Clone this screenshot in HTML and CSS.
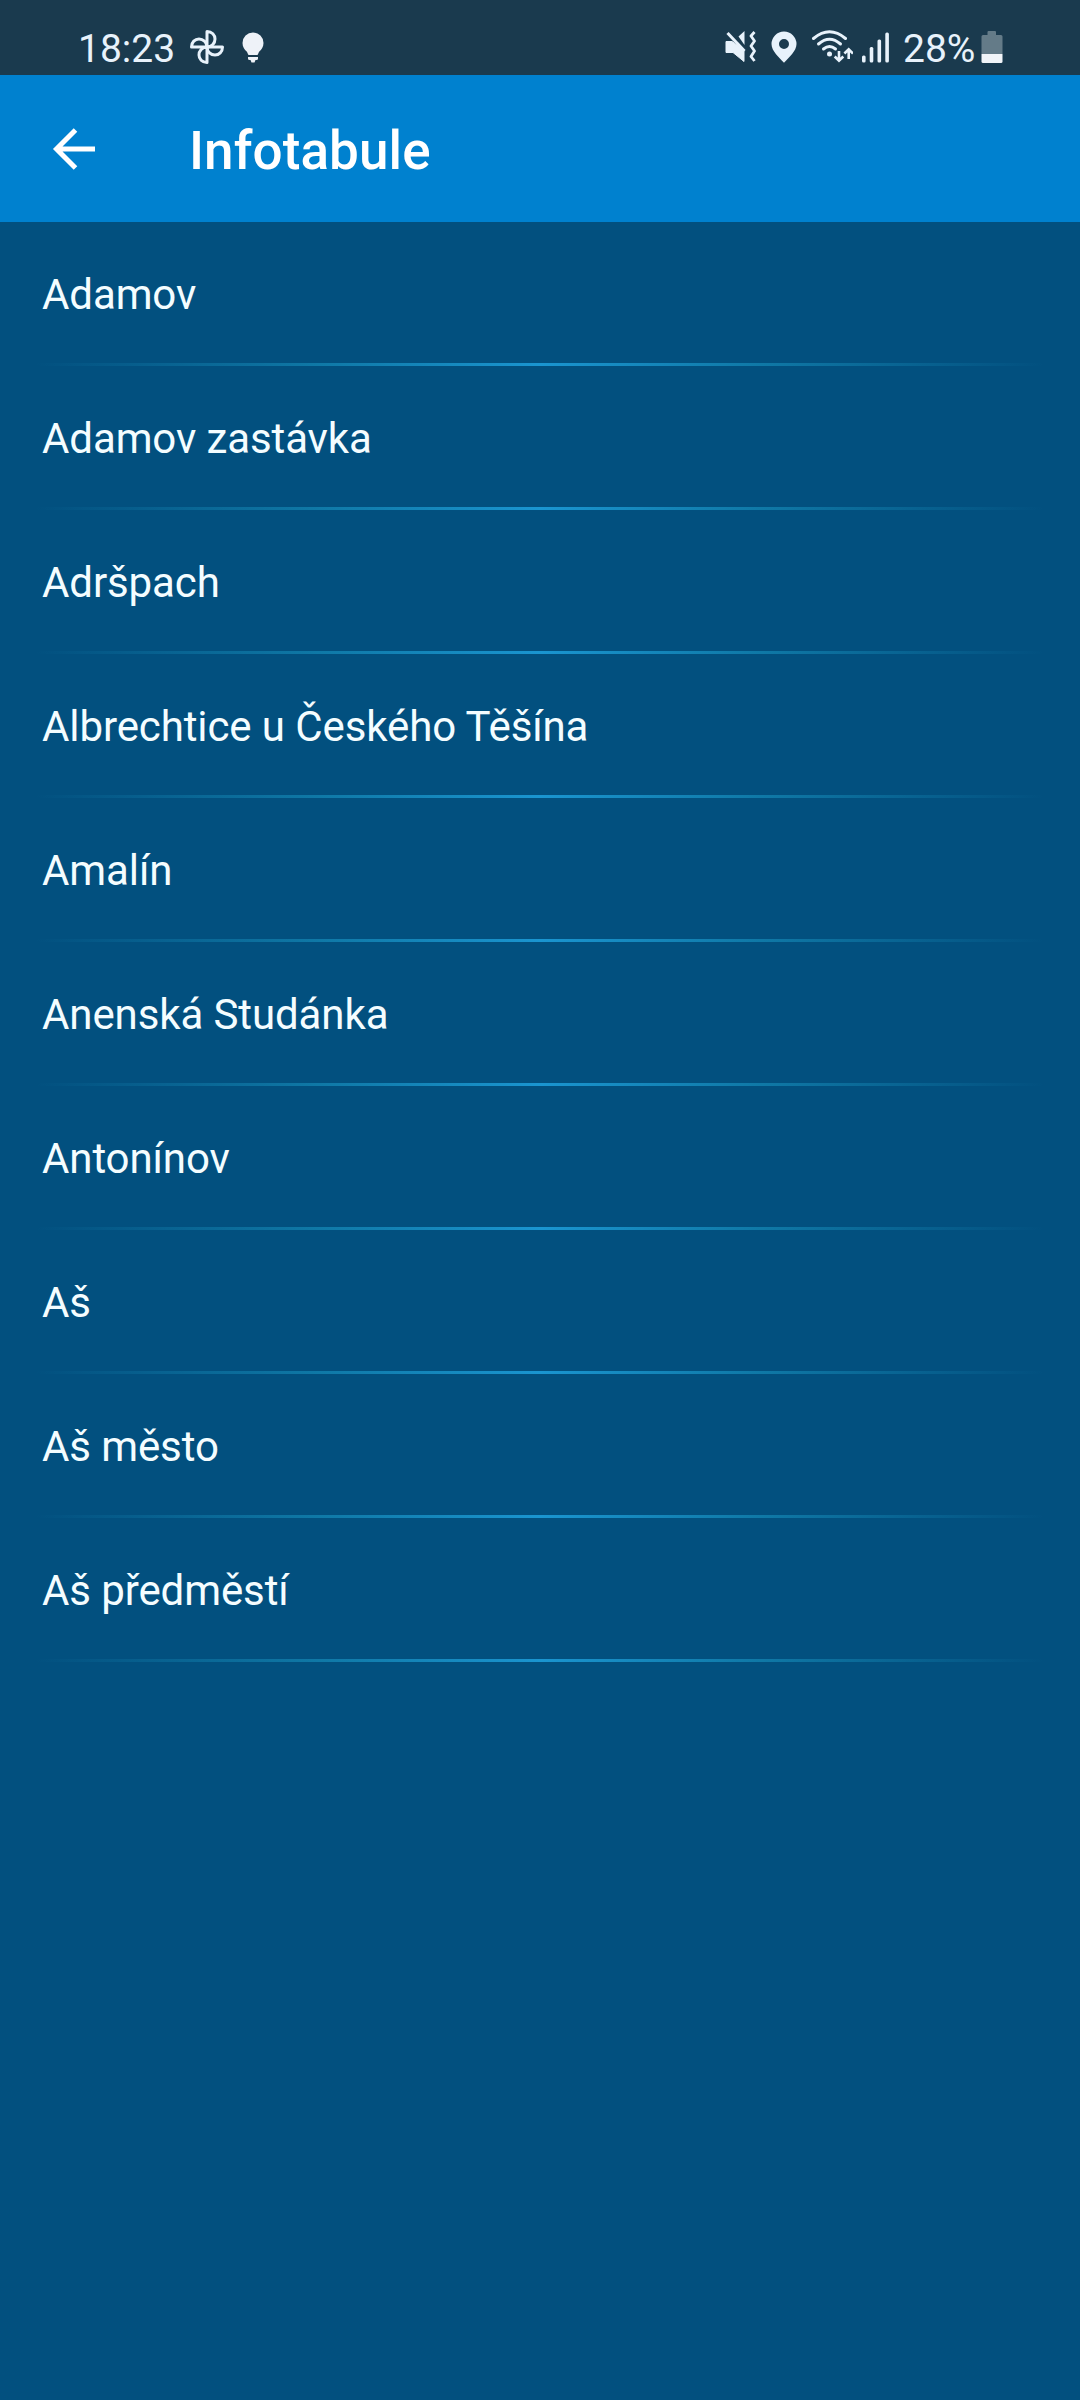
FILE: index.html
```html
<!DOCTYPE html>
<html lang="cs">
<head>
    <meta charset="UTF-8">
    <meta name="viewport" content="width=device-width, initial-scale=1.0">
    <title>Infotabule</title>
    <link rel="stylesheet" href="styles.css">
</head>
<body>
    <div class="status-bar">
        <div class="status-left">
            <span class="clock">18:23</span>
            <svg class="icon-fan" width="36" height="36" viewBox="-18 -18 36 36">
                <g fill="none" stroke="#e8f2fb" stroke-width="3" stroke-linejoin="round">
                    <path d="M0 0V-15.5C5 -15.5 8 -12 8 -8C8 -4 5 0 0 0Z"/>
                    <path d="M0 0H15.5C15.5 5 12 8 8 8C4 8 0 5 0 0Z"/>
                    <path d="M0 0V15.5C-5 15.5 -8 12 -8 8C-8 4 -5 0 0 0Z"/>
                    <path d="M0 0H-15.5C-15.5 -5 -12 -8 -8 -8C-4 -8 0 -5 0 0Z"/>
                </g>
            </svg>
            <svg class="icon-bulb" width="22" height="32" viewBox="0 0 22 32" fill="#eef2f8">
                <path d="M11 0.500A10.500 10.500 0 0 1 21.500 11C21.500 15 19.500 17.500 17.300 19.600C16.300 20.600 16.300 23 15.300 23H6.700C5.700 23 5.700 20.600 4.700 19.600C2.500 17.500 0.500 15 0.500 11A10.500 10.500 0 0 1 11 0.500Z"/>
                <path d="M6 25H16V26.500Q16 28 14.500 28H13.500L12.500 30.500H9.500L8.500 28H7.500Q6 28 6 26.500Z"/>
            </svg>
        </div>
        <div class="status-right">
            <svg class="icon-mute" width="32" height="34" viewBox="724 29 32 34">
                <path d="M726 41.500H732L744 50V61.500L733 52.500H726Z" fill="#e8f2fb" stroke="#e8f2fb" stroke-width="1" stroke-linejoin="round"/>
                <path d="M744.500 31V45L738.500 36.500Z" fill="#e8f2fb"/>
                <path d="M727.500 33L744.500 51" stroke="#e8f2fb" stroke-width="3" fill="none"/>
                <path d="M754.500 32L751 36L754.500 41L751 46L754.500 51L751 56.500L754.500 61" stroke="#e8f2fb" stroke-width="2.800" fill="none" stroke-linejoin="round"/>
            </svg>
            <svg class="icon-pin" width="26" height="32" viewBox="0 0 26 32">
                <path fill="#e8f2fb" fill-rule="evenodd" d="M13 0.500A12.500 12.500 0 0 0 0.500 13C0.500 20 8 26.500 13 31.700C18 26.500 25.500 20 25.500 13A12.500 12.500 0 0 0 13 0.500ZM13 8A5 5 0 1 1 13 18A5 5 0 0 1 13 8Z"/>
            </svg>
            <svg class="icon-wifi" width="42" height="34" viewBox="811 29 42 34">
                <g fill="none" stroke="#e8f2fb" stroke-width="3" stroke-linecap="round">
                    <path d="M813.500 38.500Q829.500 25 845.500 38.500"/>
                    <path d="M818.500 44Q829.500 34.500 840.500 44"/>
                    <path d="M823.500 49Q829.500 44 835.500 49"/>
                </g>
                <circle cx="829.500" cy="54" r="2.500" fill="#e8f2fb"/>
                <g fill="none" stroke="#e8f2fb" stroke-width="2.600">
                    <path d="M839 51V61M834.700 56.500L839 60.700L843.300 56.500"/>
                    <path d="M848.700 59V49M844.400 53.500L848.700 49.300L853 53.500"/>
                </g>
            </svg>
            <svg class="icon-signal" width="28" height="32" viewBox="861 31 28 32" fill="#e8f2fb">
                <rect x="862" y="55.500" width="3.600" height="7" rx="1.500"/>
                <rect x="869.700" y="47" width="3.600" height="15.500" rx="1.500"/>
                <rect x="877.500" y="39.500" width="3.600" height="23" rx="1.500"/>
                <rect x="885.300" y="32.500" width="3.600" height="30" rx="1.500"/>
            </svg>
            <span class="battery-text">28%</span>
            <svg class="icon-battery" width="22" height="34" viewBox="0 0 22 34">
                <path fill="#647b88" d="M6.500 2Q6.500 1 7.500 1H14Q15 1 15 2V5H20Q21.500 5 21.500 6.500V24H0.500V6.500Q0.500 5 2 5H6.500Z"/>
                <path fill="#f1f4f8" d="M0.500 24H21.500V31.500Q21.500 33 20 33H2Q0.500 33 0.500 31.500Z"/>
            </svg>
        </div>
    </div>

    <div class="app-bar">
        <svg class="icon-back" width="44" height="42" viewBox="0 0 44 42" fill="none" stroke="#fff" stroke-width="5">
            <path d="M43 21H4M23.500 2L4.500 21L23.500 40"/>
        </svg>
        <h1>Infotabule</h1>
    </div>

    <ul class="station-list">
        <li>Adamov</li>
        <li>Adamov zastávka</li>
        <li>Adršpach</li>
        <li>Albrechtice u Českého Těšína</li>
        <li>Amalín</li>
        <li>Anenská Studánka</li>
        <li>Antonínov</li>
        <li>Aš</li>
        <li>Aš město</li>
        <li>Aš předměstí</li>
    </ul>
</body>
</html>
```
FILE: styles.css
```css
body {
    margin: 0;
    min-height: 2400px;
    font-family: Roboto, sans-serif;
    background-color: #02507f;
    color: #f4fdff;
}
svg {
    display: block;
    flex: none;
}
.status-bar {
    display: flex;
    justify-content: space-between;
    height: 75px;
    padding: 0 77px 0 78px;
    box-sizing: border-box;
    background-color: #1a3a4e;
    color: #e8f2fb;
    font-size: 39px;
    line-height: 46px;
}
.status-left, .status-right {
    display: flex;
    align-items: flex-start;
}
.clock, .battery-text {
    margin-top: 26px;
}
.clock {
    width: 111px;
}
.icon-fan {
    margin-top: 29px;
}
.icon-bulb {
    margin: 32px 0 0 17px;
}
.icon-mute, .icon-wifi {
    margin-top: 29px;
}
.icon-pin {
    margin: 31px 14px 0 15px;
}
.icon-signal {
    margin: 31px 0 0 8px;
}
.battery-text {
    width: 78px;
    margin-left: 14px;
}
.icon-battery {
    margin-top: 30px;
}
.app-bar {
    display: flex;
    align-items: center;
    height: 147px;
    padding-left: 52px;
    box-sizing: border-box;
    background-color: #0081cf;
}
.app-bar h1 {
    margin: 4px 0 0 93px;
    font-size: 53px;
    font-weight: 500;
    letter-spacing: 0.1px;
    line-height: 62px;
    color: #fff;
}
.station-list {
    margin: 0;
    padding: 0;
    list-style: none;
}
.station-list li {
    height: 144px;
    padding: 1px 42px 0;
    box-sizing: border-box;
    font-size: 42px;
    letter-spacing: -0.1px;
    line-height: 144px;
    background: linear-gradient(to right, rgba(20, 130, 170, 0), #0f78a6 28%, #1a95d0 50%, #0f78a6 72%, rgba(20, 130, 170, 0)) 36px 141px / 1008px 3px no-repeat;
}
```
